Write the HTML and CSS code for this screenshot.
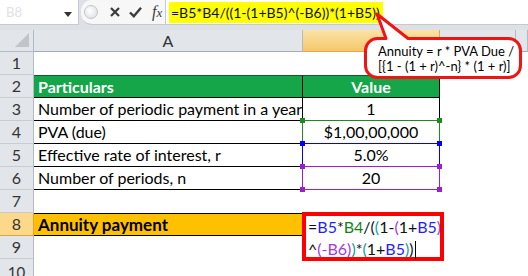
FILE: index.html
```html
<!DOCTYPE html>
<html lang="en">
<head>
<meta charset="UTF-8">
<meta name="viewport" content="width=device-width, initial-scale=1.0">
<title>Annuity payment</title>
<link rel="stylesheet" href="styles.css">
</head>
<body>
    <div class="fbar">
        <div class="namebox">
            <span class="ref">B8</span>
            <span class="dd"></span>
        </div>
        <div class="tools">
            <span class="grip"></span>
            <svg class="ic" width="14" height="14" viewBox="0 0 14 14"><path d="M3 3 L11 11 M11 3 L3 11" stroke="#3c3c3c" stroke-width="2.2" fill="none"/></svg>
            <svg class="ic" width="15" height="14" viewBox="0 0 15 14"><path d="M2 7.5 L5.8 11.2 L13 2.8" stroke="#3c3c3c" stroke-width="2.4" fill="none"/></svg>
            <span class="fx">f<i>x</i></span>
        </div>
        <div class="input"><span class="hl">=B5*B4/((1-(1+B5)^(-B6))*(1+B5))</span></div>
    </div>

    <div class="sheet">
        <div class="corner"><span class="tri"></span></div>
        <div class="colh">A</div>
        <div class="colh sel"></div>
        <div class="colh"></div>
        <div class="colh"></div>

        <div class="rowh">1</div>

        <div class="rowh">2</div>
        <div class="cell a head top">Particulars</div>
        <div class="cell b head top">Value</div>

        <div class="rowh">3</div>
        <div class="cell a">Number of periodic payment in a year</div>
        <div class="cell b">1</div>

        <div class="rowh">4</div>
        <div class="cell a">PVA (due)</div>
        <div class="cell b">$1,00,00,000<span class="rng green"><i class="k tl"></i><i class="k tr"></i><i class="k bl"></i><i class="k br"></i></span></div>

        <div class="rowh">5</div>
        <div class="cell a">Effective rate of interest, r</div>
        <div class="cell b">5.0%<span class="rng blue"><i class="k tl"></i><i class="k tr"></i><i class="k bl"></i><i class="k br"></i></span></div>

        <div class="rowh">6</div>
        <div class="cell a">Number of periods, n</div>
        <div class="cell b">20<span class="rng purple"><i class="k tl"></i><i class="k tr"></i><i class="k bl"></i><i class="k br"></i></span></div>

        <div class="rowh">7</div>

        <div class="rowh sel">8</div>
        <div class="cell a total">Annuity payment</div>
        <div class="edit">
            <span>=</span><span class="c-b">B5</span><span>*</span><span class="c-g">B4</span><span>/(</span><span class="c-t">(</span><span>1-</span><span class="c-p">(</span><span>1+</span><span class="c-b">B5</span><span class="c-p">)</span><br>
            <span>^</span><span class="c-p">(-B6)</span><span class="c-t">)</span><span>*</span><span class="c-t">(</span><span>1+</span><span class="c-b">B5</span><span class="c-t">)</span><span>)</span><span class="caret"></span>
        </div>

        <div class="rowh">9</div>
        <div class="rowh last">10</div>
    </div>

    <svg class="tail" width="168" height="76" viewBox="0 0 168 76">
        <path d="M26 30.5 L17 6 L48 30.5 H148.5 A12 12 0 0 1 160.5 42.5 V57.5 A12 12 0 0 1 148.5 69.5 H17.5 A12 12 0 0 1 5.5 57.5 V42.5 A12 12 0 0 1 17.5 30.5 Z" fill="#fff" stroke="#f01414" stroke-width="3" stroke-linejoin="round"/>
    </svg>
    <div class="note">
        <p>Annuity = r * PVA Due /</p>
        <p>[{1 - (1 + r)^-n} * (1 + r)]</p>
    </div>
</body>
</html>
```

FILE: styles.css
```css
body {
    margin: 0;
    background-color: #fff;
    font-family: Lato, 'Liberation Sans', sans-serif;
    width: 528px;
    height: 276px;
    overflow: hidden;
    position: relative;
}

/* formula bar */
.fbar {
    display: flex;
    height: 30px;
    background-color: #dde1e6;
    box-sizing: border-box;
    padding-bottom: 5px;
}

.namebox {
    width: 78px;
    background-color: #fff;
    border-right: 1px solid #c5cad1;
    border-bottom: 1px solid #c5cad1;
    position: relative;
    display: flex;
    align-items: center;
}

.ref {
    color: #dfe2e7;
    font-size: 13px;
    padding-left: 6px;
}

.dd {
    position: absolute;
    left: 64px;
    top: 12px;
    border-left: 4px solid transparent;
    border-right: 4px solid transparent;
    border-top: 5px solid #333;
}

.tools {
    width: 84px;
    display: flex;
    align-items: center;
    background-color: #f7f7f8;
    border-bottom: 1px solid #c5cad1;
    border-radius: 11px 0 0 11px;
    margin-left: 2px;
}

.grip {
    width: 12px;
    height: 12px;
    border-radius: 50%;
    border: 1px solid #bfc4ca;
    background: radial-gradient(circle at 40% 40%, #fff, #d8dbe0);
    margin: 0 10px 0 3px;
}

.ic {
    margin-right: 6px;
}

.fx {
    font-family: 'Liberation Serif', serif;
    font-style: italic;
    font-size: 16px;
    color: #3c3c3c;
    margin-left: 3px;
}

.fx i {
    font-size: 13px;
}

.input {
    flex: 1;
    background-color: #fff;
    border-left: 1px solid #c5cad1;
    border-bottom: 1px solid #c5cad1;
    padding-left: 3px;
    display: flex;
    align-items: center;
}

.hl {
    background-color: #ffff00;
    font-size: 14px;
    padding: 2px 3px 2px 2px;
    color: #111;
}

/* sheet */
.sheet {
    display: grid;
    grid-template-columns: 34px 269px 137px 76px 1fr;
    grid-template-rows: 22px repeat(10, 23px);
    font-size: 16px;
    color: #000;
}

.corner,
.colh,
.rowh {
    background-color: #e2e6eb;
    box-sizing: border-box;
    color: #333;
}

.corner {
    border-right: 1px solid #b4bac2;
    border-bottom: 1px solid #b4bac2;
    position: relative;
}

.tri {
    position: absolute;
    right: 4px;
    bottom: 4px;
    border-left: 14px solid transparent;
    border-bottom: 14px solid #c0c5cc;
}

.colh {
    border-right: 1px solid #b4bac2;
    border-bottom: 1px solid #a4abb4;
    text-align: center;
    line-height: 21px;
}

.colh.sel {
    background: linear-gradient(#fbe3a7, #f5c86a);
    border-color: #e0a84c;
}

.rowh {
    grid-column: 1;
    border-right: 1px solid #b4bac2;
    border-bottom: 1px solid #c8cdd3;
    text-align: center;
    line-height: 22px;
}

.rowh.last {
    font-size: 15px;
    line-height: 26px;
}

.rowh.sel {
    background-color: #fcd98a;
    border-color: #e5a23a;
}

.cell {
    box-sizing: border-box;
    border-bottom: 1px solid #000;
    line-height: 22px;
    white-space: nowrap;
}

.cell.a {
    grid-column: 2;
    padding-left: 4px;
    border-right: 1px solid #000;
}

.cell.b {
    grid-column: 3;
    text-align: center;
    border-right: 1px solid #000;
    position: relative;
}

.cell.top {
    border-top: 1px solid #0d5a2a;
    line-height: 21px;
}

.head {
    background-color: #15a64a;
    color: #fff;
    font-weight: bold;
}

.total {
    background-color: #ffc000;
    font-weight: bold;
    font-size: 17px;
    border-top: 1px solid #000;
    line-height: 21px;
}

/* reference ranges */
.rng {
    position: absolute;
    left: -1px;
    right: -1px;
    top: -1px;
    bottom: -1px;
    border: 1px solid;
}

.green { border-color: #1e8a1e; }
.blue { border-color: #0000ff; }
.purple { border-color: #9a1fd0; }

.k {
    position: absolute;
    width: 5px;
    height: 5px;
}

.green .k { background-color: #1e8a1e; }
.blue .k { background-color: #0000ff; }
.purple .k { background-color: #9a1fd0; }

.tl { left: -3px; top: -3px; }
.tr { right: -3px; top: -3px; }
.bl { left: -3px; bottom: -3px; }
.br { right: -3px; bottom: -3px; }

/* cell in edit mode */
.edit {
    grid-column: 3;
    grid-row: span 2;
    margin: -1px -4px -2px -1px;
    border: 4px solid #ff0000;
    background-color: #fff;
    padding-left: 2px;
    line-height: 22px;
    font-size: 16px;
    color: #111;
    z-index: 2;
    white-space: nowrap;
}

.c-b { color: #1f1fff; }
.c-g { color: #17821a; }
.c-t { color: #12a0a0; }
.c-p { color: #a43bd6; }

.caret {
    display: inline-block;
    width: 1px;
    height: 18px;
    background-color: #000;
    vertical-align: -4px;
    margin-left: 1px;
}

/* callout */
.tail {
    position: absolute;
    left: 360px;
    top: 8px;
}

.note {
    position: absolute;
    left: 364px;
    top: 37px;
    width: 158px;
    height: 42px;
    padding: 7px 0 0 14px;
    box-sizing: border-box;
    font-size: 13px;
    color: #000;
    line-height: 15px;
}

.note p {
    margin: 0;
}
```
